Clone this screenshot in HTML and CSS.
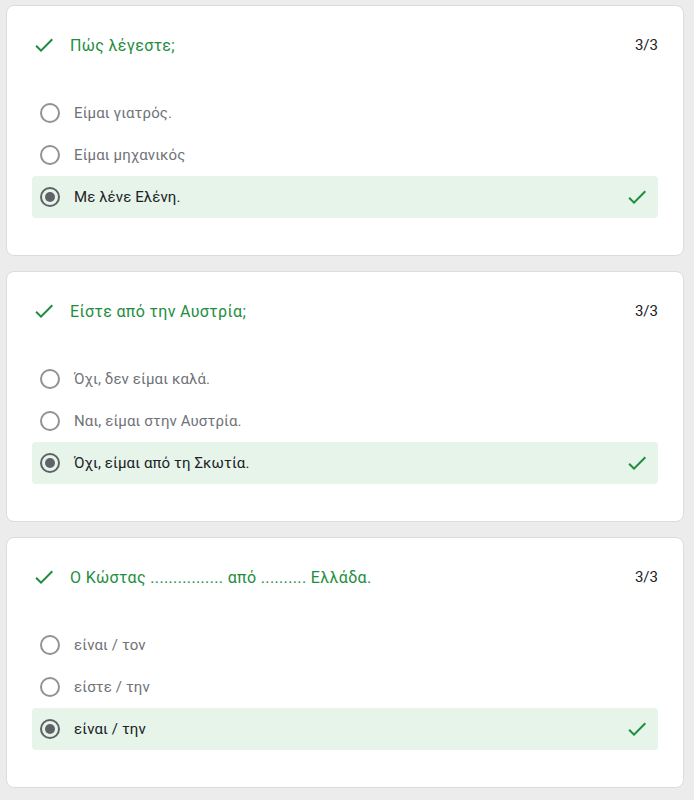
FILE: index.html
```html
<!DOCTYPE html>
<html lang="el">
<head>
<meta charset="utf-8">
<link rel="stylesheet" href="styles.css">
</head>
<body>
<div class="page">
  <div class="card">
    <div class="head">
      <svg class="icon" viewBox="0 0 24 24"><path d="M9 16.17L4.830 12l-1.42 1.41L9 19 21 7l-1.41-1.41z"/></svg>
      <div class="title">Πώς λέγεστε;</div>
      <div class="score">3/3</div>
    </div>
    <div class="options">
      <div class="opt"><span class="radio"></span><span class="label">Είμαι γιατρός.</span></div>
      <div class="opt"><span class="radio"></span><span class="label">Είμαι μηχανικός</span></div>
      <div class="opt sel"><span class="radio on"></span><span class="label">Με λένε Ελένη.</span>
        <svg class="icon" viewBox="0 0 24 24"><path d="M9 16.17L4.83 12l-1.42 1.41L9 19 21 7l-1.41-1.41z"/></svg></div>
    </div>
  </div>
  <div class="card">
    <div class="head">
      <svg class="icon" viewBox="0 0 24 24"><path d="M9 16.17L4.83 12l-1.42 1.41L9 19 21 7l-1.41-1.41z"/></svg>
      <div class="title">Είστε από την Αυστρία;</div>
      <div class="score">3/3</div>
    </div>
    <div class="options">
      <div class="opt"><span class="radio"></span><span class="label">Όχι, δεν είμαι καλά.</span></div>
      <div class="opt"><span class="radio"></span><span class="label">Ναι, είμαι στην Αυστρία.</span></div>
      <div class="opt sel"><span class="radio on"></span><span class="label">Όχι, είμαι από τη Σκωτία.</span>
        <svg class="icon" viewBox="0 0 24 24"><path d="M9 16.17L4.83 12l-1.42 1.41L9 19 21 7l-1.41-1.41z"/></svg></div>
    </div>
  </div>
  <div class="card">
    <div class="head">
      <svg class="icon" viewBox="0 0 24 24"><path d="M9 16.17L4.83 12l-1.42 1.41L9 19 21 7l-1.41-1.41z"/></svg>
      <div class="title">Ο Κώστας ................ από .......... Ελλάδα.</div>
      <div class="score">3/3</div>
    </div>
    <div class="options">
      <div class="opt"><span class="radio"></span><span class="label">είναι / τον</span></div>
      <div class="opt"><span class="radio"></span><span class="label">είστε / την</span></div>
      <div class="opt sel"><span class="radio on"></span><span class="label">είναι / την</span>
        <svg class="icon" viewBox="0 0 24 24"><path d="M9 16.17L4.83 12l-1.42 1.41L9 19 21 7l-1.41-1.41z"/></svg></div>
    </div>
  </div>
</div>
</body>
</html>
```

FILE: styles.css
```css
html, body {
  margin: 0;
  padding: 0;
  background: #ececec;
  font-family: Roboto, "Noto Sans", "DejaVu Sans", sans-serif;
}
.page {
  padding: 5px 10px 0 6px;
  display: flex;
  flex-direction: column;
  gap: 15px;
}
.card {
  background: #fff;
  border: 1px solid #dadce0;
  border-radius: 8px;
  height: 251px;
  box-sizing: border-box;
  padding: 27px 25px 0 25px;
}
.head {
  display: flex;
  align-items: center;
  height: 24px;
}
.icon {
  width: 24px;
  height: 24px;
  flex: none;
  fill: #1e8e3e;
}
.title {
  margin-left: 14px;
  flex: 1;
  font-size: 16px;
  color: #1e8e3e;
  letter-spacing: 0.35px;
}
.score {
  font-size: 15px;
  color: #202124;
}
.options {
  margin-top: 35px;
  display: flex;
  flex-direction: column;
}
.opt {
  height: 42px;
  display: flex;
  align-items: center;
  padding: 0 9px 0 8px;
  border-radius: 4px;
}
.opt.sel {
  background: #e6f4ea;
}
.radio {
  width: 20px;
  height: 20px;
  box-sizing: border-box;
  border: 2px solid #8f9296;
  border-radius: 50%;
  flex: none;
  display: flex;
  align-items: center;
  justify-content: center;
}
.radio.on {
  border-color: #5f6368;
}
.radio.on::after {
  content: "";
  width: 10px;
  height: 10px;
  border-radius: 50%;
  background: #5f6368;
}
.label {
  margin-left: 14px;
  flex: 1;
  font-size: 15px;
  color: #6f7378;
  letter-spacing: 0.1px;
}
.sel .label {
  color: #202124;
}
```
